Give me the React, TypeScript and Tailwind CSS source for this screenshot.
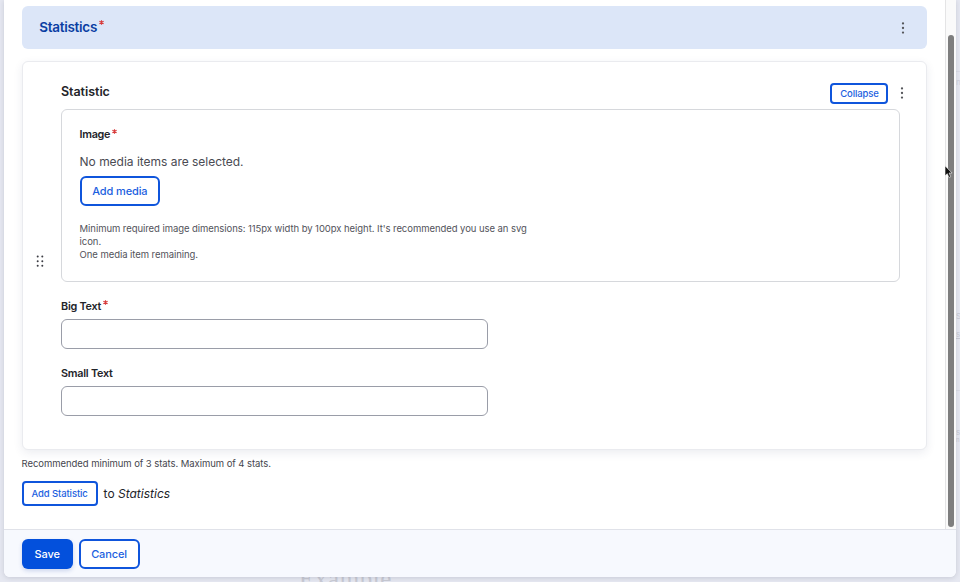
import React from "react";

function Required({ className = "" }: { className?: string }) {
  return (
    <svg viewBox="0 0 6 6" className={`h-[5px] w-[5px] shrink-0 ${className}`} aria-hidden="true">
      <path d="M3 0.2v5.6M0.5 1.6l5 2.8M5.5 1.6l-5 2.8" stroke="#d73a3a" strokeWidth="1.4" fill="none" />
    </svg>
  );
}

function MoreDots() {
  return (
    <svg viewBox="0 0 4 12" className="h-3 w-1" fill="#55565b" aria-hidden="true">
      <circle cx="2" cy="1.4" r="1.15" />
      <circle cx="2" cy="6" r="1.15" />
      <circle cx="2" cy="10.6" r="1.15" />
    </svg>
  );
}

function DragDots() {
  return (
    <svg viewBox="0 0 8 12" className="h-3 w-2" fill="#3c3d44" aria-hidden="true">
      {[1.7, 6.3].map((x) =>
        [1.6, 6.3, 10.8].map((y) => <circle key={`${x}-${y}`} cx={x} cy={y} r="1" />),
      )}
    </svg>
  );
}

function Field({ label, required }: { label: string; required?: boolean }) {
  return (
    <label className="block">
      <span className="flex h-4 items-center pt-px text-[10.8px] leading-4 font-semibold tracking-[-0.22px] text-[#232429]">
        {label}
        {required && <Required className="mb-[8px] ml-[2px]" />}
      </span>
      <input className="mt-[5px] block h-[30px] w-[427px] rounded-[6px] border border-[#9a9da8] bg-white px-3 text-sm outline-none" />
    </label>
  );
}

const outline = "flex items-center justify-center border-2 border-[#0f55dc] bg-white whitespace-nowrap text-[#1c5fe0]";

export default function App() {
  return (
    <div className="relative h-[582px] w-[960px] overflow-hidden bg-[#e6e8f1] font-['Inter',sans-serif] text-[#232429]">
      <div className="absolute top-[567px] left-[299px] font-['Liberation_Serif',serif] text-[25px] leading-6 tracking-[0.6px] text-[#c9cbd4]">
        Example
      </div>
      <div className="absolute top-[71px] left-[956px] h-px w-1 bg-[#dcdee7]" />
      <div className="absolute top-[76px] left-[956px] text-[8px] text-[#d0d3dd]">n</div>
      <div className="absolute top-[310px] left-[956px] text-[8px] text-[#c9ccd6]">S</div>
      <div className="absolute top-[328px] left-[956px] text-[8px] text-[#c9ccd6] underline">s</div>
      <div className="absolute top-[390px] left-[956px] h-px w-1 bg-[#dcdee7]" />
      <div className="absolute top-[426px] left-[956px] text-[8px] text-[#c9ccd6]">s</div>
      <div className="absolute top-[435px] left-[956px] text-[6px] text-[#c9ccd6]">n</div>

      <div className="relative ml-1 flex h-[577px] w-[952px] flex-col overflow-hidden rounded-b-[6px] bg-white shadow-[0_1px_5px_rgba(60,65,90,0.18)]">
        <div className="flex h-[529px]">
          <main className="w-[941px] pt-[6px] pr-[18px] pl-[17.6px]">
            <header className="flex h-[43px] w-[905px] items-center justify-between rounded-[6px] bg-[#dce6f8] pr-[22px] pl-[17.6px]">
              <h2 className="mb-[1px] flex items-center text-[13.5px] leading-5 font-semibold tracking-[-0.28px] text-[#0a3ea3]">
                Statistics
                <Required className="mb-[9px] ml-[2px]" />
              </h2>
              <MoreDots />
            </header>

            <section className="mt-[12px] flex h-[389px] w-[905.4px] rounded-[6px] border border-[#eaebef] bg-white shadow-[0_3px_10px_rgba(40,50,100,0.09)]">
              <div className="flex w-[38.4px] shrink-0 items-start pt-[193px] pl-[13px]">
                <DragDots />
              </div>
              <div className="w-[839px] shrink-0">
                <div className="flex h-[47px] items-end justify-between">
                  <h3 className="mb-[7px] text-[12.5px] leading-5 font-semibold tracking-[-0.05px]">Statistic</h3>
                  <div className="-mr-[4px] mb-[5px] flex items-center gap-[11.5px]">
                    <button className={`${outline} h-[21px] w-[58px] rounded-[4px] pt-px text-[9.5px] font-medium tracking-[-0.1px]`}>Collapse</button>
                    <div className="mb-px">
                      <MoreDots />
                    </div>
                  </div>
                </div>

                <div className="h-[173px] rounded-[6px] border border-[#d6d8dc] pt-[16px] pl-[17.6px]">
                  <div className="flex h-4 items-center pt-px text-[10.8px] leading-4 font-semibold tracking-[-0.3px]">
                    Image
                    <Required className="mb-[6px] ml-[2px]" />
                  </div>
                  <p className="mt-[10px] text-[12px] leading-5 tracking-[-0.02px] text-[#4a4b53]">No media items are selected.</p>
                  <button className={`${outline} mt-[4px] h-[30px] w-[80.5px] rounded-[6px] text-[11px] font-medium tracking-[-0.1px]`}>Add media</button>
                  <p className="mt-[17.4px] text-[9.5px] leading-[12.6px] tracking-[-0.06px] whitespace-nowrap text-[#52535b]">
                    Minimum required image dimensions: 115px width by 100px height. It's recommended you use an svg
                    <br />
                    icon.
                    <br />
                    One media item remaining.
                  </p>
                </div>

                <div className="mt-[16px] flex flex-col gap-4">
                  <Field label="Big Text" required />
                  <Field label="Small Text" />
                </div>
              </div>
            </section>

            <p className="mt-[7px] text-[9.5px] leading-[13px] tracking-[-0.06px] text-[#45464e]">
              Recommended minimum of 3 stats. Maximum of 4 stats.
            </p>
            <div className="mt-[11px] flex items-center gap-[6px]">
              <button className={`${outline} h-[25px] w-[76px] rounded-[4px] pt-px text-[9.5px] font-medium tracking-[-0.1px]`}>Add Statistic</button>
              <span className="text-[12px] leading-5">
                to <em>Statistics</em>
              </span>
            </div>
          </main>
          <div className="w-[11px] border-l border-[#e4e4e5] bg-[#fafafa] pt-[35px] pl-[2px]">
            <div className="h-[492px] w-[6px] rounded-full bg-[#7e7e7e]" />
          </div>
        </div>

        <footer className="flex h-12 gap-[6px] border-t border-[#e0e2e9] bg-[#f7f9fe] pt-[9px] pl-[17.6px]">
          <button className="flex h-[30px] w-[51px] items-center justify-center rounded-[6px] bg-[#0350dc] text-[11px] font-medium tracking-[-0.1px] text-white shadow-[0_2px_4px_rgba(20,60,160,0.18)]">
            Save
          </button>
          <button className={`${outline} h-[30px] w-[61px] rounded-[6px] text-[11px] font-medium tracking-[-0.1px]`}>Cancel</button>
        </footer>
      </div>

      <svg viewBox="0 0 9 14" className="absolute top-[165px] left-[944px] h-[14px] w-[9px]" aria-hidden="true">
        <path d="M1 .8v10l2.3-2.1 1.6 3.8 1.8-.8L5.1 8h3z" fill="#111" stroke="#fff" strokeWidth=".6" />
      </svg>
    </div>
  );
}
